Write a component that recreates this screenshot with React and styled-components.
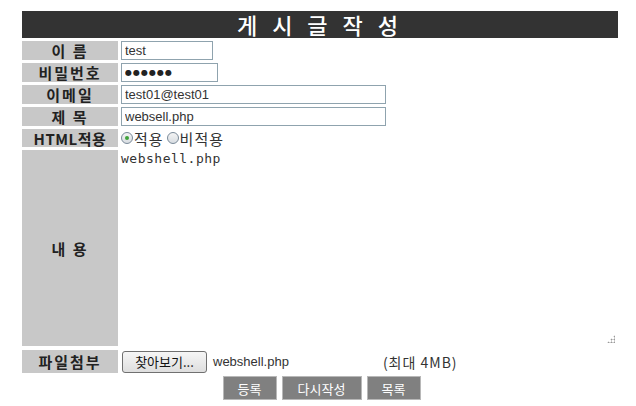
import React from 'react'
import styled, { createGlobalStyle } from 'styled-components'

const Global = createGlobalStyle`
body {
    margin: 0;
    background: #fff;
    font-family: "Noto Sans CJK KR", "Noto Sans", sans-serif;
}
`

const Page = styled.div`
width: 596px;
padding: 11px 0 0 22px;
`

const Title = styled.div`
height: 27px;
background-color: #333333;
color: #fff;
font-size: 22px;
font-weight: 500;
line-height: 27px;
text-align: center;
letter-spacing: 5px;
white-space: pre;
`

const Form = styled.div`
display: grid;
grid-template-columns: 96px 1fr;
column-gap: 3px;
row-gap: 3px;
margin-top: 3px;
`

const Label = styled.div`
background-color: #c8c8c8;
color: #222;
font-size: 15px;
font-weight: 700;
line-height: 15px;
display: flex;
align-items: center;
justify-content: center;
height: ${p => p.h || 19}px;
white-space: pre;
letter-spacing: ${p => p.ls ?? 2}px;
`

const Cell = styled.div`
display: flex;
align-items: center;
height: ${p => p.h || 19}px;
gap: 6px;
`

const TextBox = styled.input`
box-sizing: border-box;
width: ${p => p.w}px;
height: 19px;
border: 1px solid #8fa3ae;
padding: 0 3px;
font-family: "Liberation Sans", Arial, sans-serif;
font-size: 13px;
color: #333;
outline: none;
background: #fff;
`

const Secret = styled(TextBox)`
font-family: "DejaVu Sans", sans-serif;
font-size: 8px;
letter-spacing: 1px;
color: #222;
`

const Radio = styled.span`
display: inline-flex;
align-items: center;
font-size: 15px;
line-height: 1;
color: #333;
letter-spacing: 1px;
`

const Dot = styled.span`
box-sizing: border-box;
display: inline-flex;
align-items: center;
justify-content: center;
width: 12px;
height: 12px;
border-radius: 50%;
border: 1px solid #7a8a99;
background: linear-gradient(#f4f4f4, #d8dde2);
margin: 0 1px 0 ${p => p.gap || 0}px;
&::after {
    content: '';
    width: 4px;
    height: 4px;
    border-radius: 50%;
    background: ${p => p.on ? '#3fa33a' : 'transparent'};
}
`

const Content = styled.div`
position: relative;
width: 497px;
height: 196px;
padding-top: 1px;
font-family: "DejaVu Sans Mono", monospace;
font-size: 13px;
letter-spacing: 0.5px;
color: #333;
`

const Grip = styled.span`
position: absolute;
right: 3px;
bottom: 4px;
width: 8px;
height: 8px;
background:
    radial-gradient(circle, #999 0.8px, transparent 1.2px) 0 0 / 3px 3px;
clip-path: polygon(100% 0, 100% 100%, 0 100%);
`

const FileButton = styled.button`
box-sizing: border-box;
height: 22px;
width: 85px;
margin-left: 1px;
border: 1px solid #707070;
border-radius: 3px;
background: linear-gradient(#f6f6f6, #dedede);
font-family: "Noto Sans CJK KR", sans-serif;
font-size: 13px;
color: #111;
padding: 0;
`

const FileName = styled.span`
font-family: "Liberation Sans", Arial, sans-serif;
font-size: 13px;
color: #333;
`

const Limit = styled.span`
margin-left: 88px;
font-size: 14px;
color: #333;
letter-spacing: 1px;
`

const Buttons = styled.div`
display: flex;
justify-content: center;
gap: 5px;
margin-top: 3px;
padding-left: 3px;
`

const Btn = styled.button`
box-sizing: border-box;
width: ${p => p.w}px;
height: 24px;
background: #808080;
border: 1px solid #b8b8b8;
color: #fff;
font-family: "Noto Sans CJK KR", sans-serif;
font-size: 13px;
padding: 0;
`

export default () => (
    <Page>
        <Global />
        <Title>{'게 시 글 작 성'}</Title>
        <Form>
            <Label>{'이 름'}</Label>
            <Cell><TextBox w={92} defaultValue="test" readOnly /></Cell>
            <Label>비밀번호</Label>
            <Cell><Secret w={97} defaultValue="●●●●●●" readOnly /></Cell>
            <Label>이메일</Label>
            <Cell><TextBox w={265} defaultValue="test01@test01" readOnly /></Cell>
            <Label>{'제 목'}</Label>
            <Cell><TextBox w={265} defaultValue="websell.php" readOnly /></Cell>
            <Label h={18} ls={0.5}>HTML적용</Label>
            <Cell h={18}>
                <Radio><Dot on />적용<Dot gap={3} />비적용</Radio>
            </Cell>
            <Label h={196}>{'내 용'}</Label>
            <Content>
                webshell.php
                <Grip />
            </Content>
            <Label h={23}>파일첨부</Label>
            <Cell h={23}>
                <FileButton>찾아보기...</FileButton>
                <FileName>webshell.php</FileName>
                <Limit>(최대 4MB)</Limit>
            </Cell>
        </Form>
        <Buttons>
            <Btn w={54}>등록</Btn>
            <Btn w={80}>다시작성</Btn>
            <Btn w={54}>목록</Btn>
        </Buttons>
    </Page>
)
